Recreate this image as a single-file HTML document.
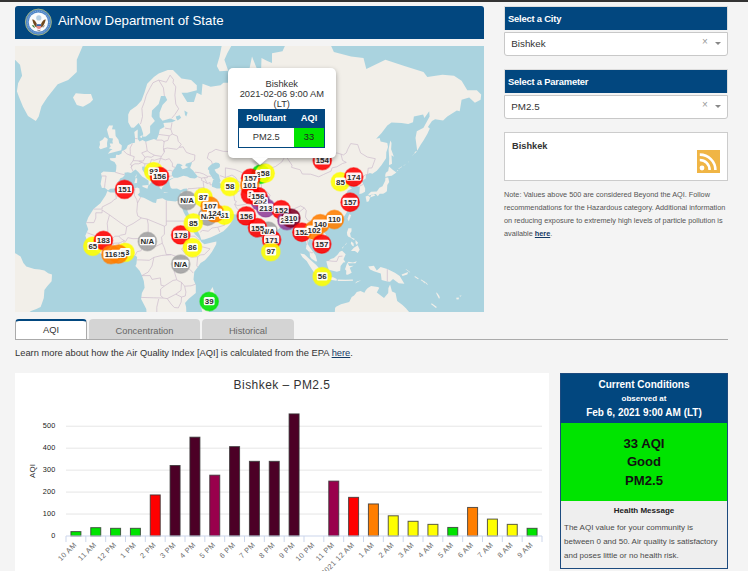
<!DOCTYPE html>
<html><head><meta charset="utf-8">
<style>
*{margin:0;padding:0;box-sizing:border-box}
html,body{width:748px;height:571px;overflow:hidden;background:#f4f4f4;font-family:"Liberation Sans",sans-serif;position:relative}
.a{position:absolute;white-space:nowrap}
#topbar{left:0;top:0;width:748px;height:2px;background:#333}
#hdr{left:15px;top:6px;width:469px;height:33px;background:#02477f;border-radius:3px 3px 0 0}
#hdrt{left:58px;top:11px;font-size:13.3px;color:#fff;line-height:20px}
#map{left:15px;top:46px;width:469px;height:266px;overflow:hidden;background:#aad3df}
.selh{left:504px;width:224px;height:23.5px;background:#02477f;border:1px solid #ddd;border-bottom:none}
.selh span{position:absolute;left:3px;top:5.6px;font-size:9.4px;font-weight:bold;color:#fff;line-height:11px;letter-spacing:-0.2px}
.selb{left:504px;width:224px;height:24px;background:#fff;border:1px solid #c8c8c8;border-radius:0 0 3px 3px}
.selb .v{position:absolute;left:6.3px;top:5.2px;font-size:9.8px;color:#333;line-height:11px}
.selb .x{position:absolute;left:197px;top:3.5px;font-size:10px;color:#999;line-height:11px}
.selb .ar{position:absolute;left:210px;top:9.5px;width:0;height:0;border-left:3px solid transparent;border-right:3px solid transparent;border-top:3px solid #888}
#rss{left:504px;top:132px;width:224px;height:49px;background:#fff;border:1px solid #ccc}
#note{left:504px;top:188px;font-size:7.3px;color:#555;line-height:13px;white-space:normal;width:230px}
.tab{top:319px;height:20px;background:#d4d4d4;border-radius:4px 4px 0 0;font-size:9.3px;color:#666;text-align:center;line-height:24px}
#tab1{left:15px;width:72px;background:#fff;border:1px solid #aaa;border-top:2px solid #02477f;color:#333;line-height:19px;border-bottom:none}
#tabline{left:15px;top:339px;width:713px;height:1px;background:#aaa}
#learn{left:15px;top:348px;font-size:9.33px;color:#333;line-height:11px}
#chart{left:15px;top:373px;width:534px;height:198px;background:#fff}
#cc{left:560px;top:373px;width:168px;height:196px;border:1px solid #1c4a7e;background:#eee}
</style></head><body>
<div class="a" id="topbar"></div>
<div class="a" id="hdr"></div>
<svg class="a" style="left:24px;top:8px" width="29" height="29" viewBox="0 0 29 29">
  <circle cx="14.4" cy="14.1" r="13" fill="#4f86c8" stroke="#a9b87a" stroke-width="0.9"/>
  <circle cx="14.4" cy="14.1" r="11" fill="none" stroke="#8fb3e0" stroke-width="1" stroke-dasharray="1 1"/>
  <circle cx="14.4" cy="14.1" r="9.7" fill="#fbfbfb"/>
  <circle cx="14.8" cy="9.9" r="2.6" fill="#b7d0e4"/>
  <path d="M8.2 11.5 Q10.5 11 12.6 15.5 L12.8 19.5 Q10 18.5 8.2 11.5Z" fill="#70481f"/>
  <path d="M21.8 11.5 Q19.5 11 17.2 15.5 L17 19.5 Q20 18.5 21.8 11.5Z" fill="#70481f"/>
  <path d="M7.8 17 Q9 20 11 20 L10 17.5Z" fill="#3f8a3f"/>
  <path d="M21 17 Q20 20 18.5 20 L19.5 17.5Z" fill="#999"/>
  <rect x="12.7" y="16.2" width="4.4" height="1.8" fill="#2f5ea8"/>
  <path d="M12.7 18 H17.1 V20 Q14.9 22.3 12.7 20Z" fill="#e98a8a"/>
  <path d="M13 21.5 Q14.9 23 16.8 21.5 L16 23 Q14.9 23.6 13.8 23Z" fill="#888"/>
</svg>
<div class="a" id="hdrt">AirNow Department of State</div>
<div class="a" id="map"><svg width="469" height="266" viewBox="0 0 469 266" style="position:absolute;left:0;top:0">
<rect width="469" height="266" fill="#aad3df"/>
<polygon points="92.4,145.0 90.7,149.2 85.4,157.3 78.5,163.1 73.2,171.6 71.1,177.2 73.2,183.2 70.3,189.8 71.9,194.1 75.1,197.0 77.6,199.9 79.9,203.8 83.7,206.3 89.4,209.7 96.0,208.2 101.8,208.6 106.5,206.3 110.1,205.9 115.1,209.9 119.9,209.3 122.1,210.9 121.8,214.3 121.4,218.1 120.4,220.0 124.6,224.8 126.9,229.6 128.8,234.9 129.6,241.7 126.9,247.0 126.1,253.0 131.3,262.9 132.2,278.1 171.3,278.1 171.3,265.2 171.1,261.1 170.0,257.0 173.8,252.8 180.8,247.0 180.8,239.2 178.5,233.4 179.3,225.7 182.7,221.3 185.6,217.1 190.0,214.3 194.2,209.5 197.0,205.7 201.2,198.2 201.4,195.5 197.0,196.4 189.4,198.2 186.2,195.8 185.0,193.5 179.9,188.2 177.0,183.2 174.7,177.2 171.3,171.2 168.4,165.7 165.8,158.4 169.0,163.1 170.3,159.2 173.2,166.8 178.3,176.1 181.8,183.2 184.8,189.2 186.3,193.7 189.4,193.5 196.1,191.2 203.1,188.0 208.4,185.2 212.3,181.4 215.1,178.2 217.6,174.1 215.1,171.8 211.1,169.1 210.9,166.1 209.4,167.8 206.5,170.6 202.0,170.4 202.0,166.6 200.4,169.3 198.9,165.5 195.1,159.7 196.6,158.1 199.5,159.9 201.6,162.7 207.5,165.7 210.9,164.4 212.8,167.4 221.0,168.5 230.5,168.0 231.9,169.9 234.7,172.4 237.0,173.7 235.1,174.5 237.0,177.2 242.0,176.1 242.4,181.2 243.7,187.6 246.2,193.3 249.0,199.1 251.3,202.6 252.6,200.9 255.7,198.4 256.6,192.9 256.3,188.2 260.5,186.0 264.6,182.2 268.6,178.8 269.4,176.1 272.3,175.1 276.1,175.1 278.5,174.5 279.5,177.6 282.7,182.2 283.5,187.2 285.4,187.6 289.6,186.2 290.7,192.1 291.5,199.0 290.9,202.8 294.7,206.6 294.9,210.5 296.6,212.8 300.8,215.6 302.2,215.2 300.6,209.5 298.6,206.5 295.1,201.8 292.6,198.0 294.0,193.7 295.1,192.1 296.1,193.7 298.6,195.1 300.8,198.0 303.3,201.7 306.9,198.4 311.7,196.0 311.7,191.6 310.9,188.4 307.1,184.6 305.0,181.2 306.7,178.2 309.4,176.1 312.6,176.1 313.8,178.6 315.1,176.1 319.9,174.7 325.6,173.3 329.6,169.7 331.5,166.8 333.2,162.9 335.9,158.4 334.7,156.6 335.9,155.3 333.8,152.3 331.1,148.0 332.8,144.5 337.0,142.4 333.8,140.2 330.2,141.2 328.1,137.5 331.3,135.1 334.7,132.6 336.5,133.6 334.7,137.8 337.0,136.3 340.5,135.1 342.4,136.1 342.2,140.2 344.8,140.9 344.3,148.0 346.9,147.5 350.0,145.7 350.2,142.6 348.5,138.5 346.6,135.3 350.7,132.6 350.9,128.8 354.9,126.9 357.4,127.7 361.8,124.8 366.4,119.2 371.1,112.2 371.3,106.3 373.0,101.1 372.3,97.0 365.6,95.4 364.7,92.1 361.2,92.8 366.6,87.0 372.3,79.6 376.5,76.6 386.6,77.0 393.2,78.1 398.0,76.2 398.9,70.5 408.1,68.5 409.4,72.0 414.2,65.3 414.6,70.5 408.5,81.8 401.8,85.3 400.5,92.1 402.2,104.8 405.8,98.6 408.5,94.4 412.3,88.1 414.8,82.5 412.9,81.0 417.0,75.1 420.1,73.2 428.1,74.4 432.3,70.5 441.8,64.4 444.7,65.3 446.6,53.7 454.2,51.4 459.9,56.8 465.6,53.7 466.2,48.6 461.8,44.3 452.3,44.3 446.6,34.7 439.0,29.8 427.5,28.7 412.3,30.9 408.5,25.9 389.4,20.0 370.4,13.8 351.3,23.0 348.5,11.9 336.1,10.6 318.9,6.0 309.4,-14.8 301.8,-25.1 284.6,-10.8 271.3,-3.2 267.5,5.3 257.0,7.3 257.0,17.0 252.3,15.1 246.5,11.9 245.6,39.3 242.7,46.7 240.8,39.3 242.4,24.1 237.0,10.6 233.2,28.7 230.4,36.7 219.9,30.3 218.0,36.7 208.4,36.7 205.6,39.3 195.7,40.8 187.5,37.8 186.5,49.1 181.8,46.7 178.9,55.9 172.2,55.9 169.4,51.4 166.5,46.7 172.2,46.7 181.8,44.3 181.8,39.3 176.1,34.1 166.5,32.5 158.0,24.1 152.8,24.1 143.7,27.6 138.9,30.9 132.2,37.8 129.4,46.7 126.5,54.6 121.8,59.8 115.1,64.4 113.2,68.5 113.2,76.2 116.1,81.4 118.9,81.8 123.7,77.0 126.1,81.0 128.1,87.4 128.1,90.8 130.9,90.4 135.1,87.0 135.1,79.9 139.9,75.1 136.6,70.5 137.0,64.4 143.7,58.1 146.0,50.0 150.3,50.0 152.2,54.1 147.5,59.0 144.6,66.5 144.6,71.3 147.5,74.7 155.1,72.4 160.8,74.4 157.0,76.2 148.4,77.0 149.4,81.0 144.8,83.5 143.7,88.8 141.4,94.1 138.9,93.1 134.2,94.4 130.7,95.7 127.5,94.1 124.6,95.4 122.7,93.1 122.7,83.5 119.3,86.0 120.1,92.4 119.9,96.7 117.0,97.3 112.8,99.2 111.3,102.7 109.4,103.9 106.9,105.1 106.5,107.5 103.9,109.0 101.2,108.7 100.6,111.9 94.7,112.2 95.5,114.2 99.5,115.9 101.4,119.2 101.2,123.2 100.6,126.2 96.4,125.9 88.4,125.4 86.0,127.2 86.9,131.1 85.6,138.0 86.9,142.1 89.6,141.7 91.7,143.3 93.0,144.5 95.3,142.8 99.9,142.6 102.7,139.0 104.1,137.8 103.1,136.1 105.4,132.3 107.9,131.3 109.8,129.0 109.4,126.7 112.8,126.2 116.1,126.9 117.6,125.4 120.6,123.5 123.3,125.9 125.6,128.8 127.1,130.5 130.7,132.8 133.6,134.8 133.6,139.7 135.3,137.5 136.2,136.3 135.3,133.8 138.9,134.6 136.1,132.1 134.2,130.0 130.3,128.2 127.3,123.8 127.1,120.8 130.0,120.3 129.6,121.6 131.3,121.1 134.0,125.6 137.0,127.2 139.9,129.5 140.6,132.3 140.6,134.1 142.2,136.1 143.7,138.8 144.8,141.9 146.5,143.6 147.5,140.9 148.8,140.0 149.4,138.5 147.1,136.6 148.6,134.8 147.3,133.3 149.4,132.8 153.2,132.8 153.6,133.8 157.0,132.3 158.9,131.6 157.0,129.8 156.8,126.7 158.3,124.0 160.2,121.4 162.2,117.8 164.6,117.8 167.7,119.2 165.6,120.8 167.7,123.2 171.3,121.9 173.2,121.1 170.3,120.0 170.9,117.8 177.0,115.9 176.4,118.6 175.1,121.9 178.0,124.6 182.9,130.8 179.9,132.6 175.1,132.1 172.2,130.5 168.4,129.8 162.7,131.8 159.1,131.8 154.2,134.6 154.7,137.5 154.7,138.8 155.9,142.1 157.4,142.8 162.0,142.6 165.6,144.3 168.8,142.8 172.2,142.4 171.9,145.0 172.1,147.1 170.3,151.9 169.0,155.3 165.2,155.5 162.7,154.6 160.6,155.5 151.3,154.6 147.5,152.3 141.8,153.2 141.0,157.0 138.0,156.4 133.2,154.1 128.8,151.7 125.2,151.0 122.7,148.7 124.8,146.4 124.4,142.6 122.3,141.4 118.9,142.4 113.2,142.6 109.4,142.6 103.7,145.0 99.9,146.6 95.1,146.4" fill="#f2efe9"/>
<polygon points="92.8,107.8 106.3,104.2 106.9,99.5 104.2,97.3 103.5,93.8 100.6,90.1 100.2,83.5 97.0,83.2 98.0,79.6 94.1,79.6 91.9,83.5 93.0,87.7 94.3,92.1 98.0,92.4 97.4,95.4 98.0,97.6 94.7,97.6 95.7,100.8 93.8,102.3 97.6,103.6 95.7,104.2" fill="#f2efe9"/>
<polygon points="92.2,101.1 92.0,97.0 92.8,93.1 89.8,91.1 87.5,93.8 84.6,95.4 85.0,98.6 84.0,101.7 85.6,103.3 88.4,102.3" fill="#f2efe9"/>
<polygon points="61.8,59.0 58.0,51.4 60.8,47.2 69.4,48.1 76.0,48.1 78.0,53.7 75.1,56.8 68.0,60.7" fill="#f2efe9"/>
<polygon points="20.8,75.1 23.7,70.5 26.5,60.2 32.2,51.4 42.7,38.3 53.2,34.1 61.8,25.9 61.8,13.8 68.4,-1.7 69.4,-47.8 -10.6,-47.8 -10.6,13.8 0.0,13.8 5.0,18.8 7.1,29.8 3.1,37.3 1.9,45.3 4.0,50.9 8.0,60.7 13.0,70.1" fill="#f2efe9"/>
<polygon points="201.8,20.0 204.6,25.3 213.2,24.7 209.4,13.8 212.3,7.3 218.0,-3.2 233.2,-19.0 218.0,-14.8 206.5,0.4 204.6,10.6 202.7,17.0" fill="#f2efe9"/>
<polygon points="374.2,119.2 377.0,117.8 376.5,109.3 378.9,110.7 376.1,103.3 376.5,97.0 375.5,94.4 374.8,97.0 373.6,103.3 374.2,112.2 374.0,117.8" fill="#f2efe9"/>
<polygon points="370.4,131.1 372.7,130.3 376.7,129.8 381.4,126.4 378.0,124.0 374.0,120.5 373.2,125.1 370.9,126.7 370.2,129.0" fill="#f2efe9"/>
<polygon points="353.2,148.5 356.1,145.7 361.8,145.4 364.5,141.7 367.5,140.2 370.2,134.8 370.4,131.8 373.2,131.6 374.2,136.1 372.3,139.0 372.1,142.4 371.9,145.2 370.0,146.8 368.1,147.8 364.7,147.8 362.8,150.3 360.8,148.0 357.0,148.5 354.2,149.4" fill="#f2efe9"/>
<polygon points="355.1,151.4 360.3,149.6 358.9,148.2 356.3,148.7" fill="#f2efe9"/>
<polygon points="350.6,150.5 353.2,149.4 355.1,151.4 353.8,155.3 351.7,155.9 350.9,152.3" fill="#f2efe9"/>
<polygon points="332.5,173.1 334.2,168.3 336.1,168.9 335.1,172.0 333.8,175.3" fill="#f2efe9"/>
<polygon points="310.6,180.8 313.2,179.0 315.1,180.0 313.2,182.8 310.7,182.2" fill="#f2efe9"/>
<polygon points="255.7,202.8 256.5,199.3 259.7,203.8 258.4,206.3 256.1,206.1" fill="#f2efe9"/>
<polygon points="331.9,186.6 333.4,182.2 336.5,182.2 336.5,185.2 335.1,187.6 335.9,191.2 339.9,193.1 338.9,193.9 335.3,191.6 333.4,190.8 332.3,189.2" fill="#f2efe9"/>
<polygon points="336.1,204.7 338.9,201.8 342.7,199.3 344.7,203.8 342.7,207.0 339.9,205.1 336.5,205.1" fill="#f2efe9"/>
<polygon points="340.5,194.1 343.1,196.8 341.8,199.0 340.5,197.0" fill="#f2efe9"/>
<polygon points="336.1,195.5 338.4,197.0 338.9,200.5 337.0,199.3 335.9,197.8" fill="#f2efe9"/>
<polygon points="326.9,202.0 331.3,198.0 331.9,196.4 330.4,198.2 327.5,202.4" fill="#f2efe9"/>
<polygon points="311.3,215.2 312.5,220.0 313.8,223.8 321.8,225.7 325.2,224.8 325.6,220.0 328.3,216.6 330.4,216.2 328.5,213.3 330.7,208.2 327.1,204.7 324.6,205.7 322.7,208.6 318.9,212.0 315.7,213.1 313.2,214.9" fill="#f2efe9"/>
<polygon points="285.2,207.6 289.4,208.2 294.7,213.3 301.2,219.1 305.4,223.8 305.2,229.2 302.7,229.4 298.6,225.7 294.7,220.0 291.7,214.9 287.5,211.2" fill="#f2efe9"/>
<polygon points="304.1,231.1 305.6,229.4 310.0,229.9 314.2,231.3 318.2,231.3 321.8,233.0 321.6,234.7 315.1,233.8 309.4,233.0 304.6,231.5" fill="#f2efe9"/>
<polygon points="322.7,233.6 330.4,233.8 337.8,233.6 338.0,234.7 330.4,235.1 322.7,234.9" fill="#f2efe9"/>
<polygon points="339.9,237.4 346.2,234.2 341.8,235.5" fill="#f2efe9"/>
<polygon points="331.1,228.6 331.3,224.8 330.0,223.2 331.9,217.7 333.4,215.8 338.0,216.4 341.8,215.2 340.5,217.3 332.8,217.3 334.2,220.0 338.7,219.8 334.7,221.7 336.7,226.7 332.8,228.8" fill="#f2efe9"/>
<polygon points="353.2,220.4 358.9,219.8 361.8,224.6 365.6,221.0 372.3,223.1 379.9,226.7 384.7,230.1 389.4,237.8 383.7,237.2 378.0,233.0 375.1,235.7 372.3,235.5 366.6,234.0 365.8,227.6 358.9,225.3 355.1,223.4" fill="#f2efe9"/>
<polygon points="386.6,228.6 393.2,226.1 392.3,228.6 387.5,229.9" fill="#f2efe9"/>
<polygon points="320.1,262.1 321.0,260.7 326.0,258.2 334.2,256.0 336.7,251.0 339.1,249.4 341.8,246.0 345.6,245.0 349.4,246.8 350.9,244.1 352.8,241.9 356.1,240.0 362.8,241.1 364.3,241.7 361.8,246.4 369.0,252.0 373.2,247.0 373.4,242.1 375.1,238.6 377.0,245.4 380.5,247.0 382.2,255.0 387.5,259.0 390.9,262.3 396.1,268.4 395.1,278.1 318.9,278.1" fill="#f2efe9"/>
<polygon points="187.5,267.3 186.2,261.1 188.3,256.0 187.5,251.0 191.3,248.4 194.5,246.0 197.6,241.1 199.7,247.8 198.5,251.0 195.1,262.1 193.4,267.3" fill="#f2efe9"/>
<polygon points="165.2,147.5 166.5,145.9 169.6,145.2 168.4,147.1 166.5,147.8" fill="#f2efe9"/>
<polygon points="148.4,146.1 153.8,146.4 149.4,146.8" fill="#f2efe9"/>
<polygon points="127.3,139.5 133.4,139.0 132.4,142.8 127.5,140.7" fill="#f2efe9"/>
<polygon points="119.3,137.3 120.8,131.8 122.3,132.8 122.0,137.1" fill="#f2efe9"/>
<polygon points="120.1,131.3 121.8,127.7 121.2,131.3" fill="#f2efe9"/>
<polygon points="124.6,91.1 127.7,88.8 126.9,92.1" fill="#f2efe9"/>
<polygon points="399.9,229.9 403.7,232.4 403.1,233.2 399.5,230.9" fill="#f2efe9"/>
<polygon points="406.2,233.4 410.8,236.3 410.0,236.9 405.6,234.0" fill="#f2efe9"/>
<polygon points="408.1,235.9 410.2,236.9 409.4,237.2" fill="#f2efe9"/>
<polygon points="410.9,236.3 412.9,238.4 412.3,238.8 410.4,237.1" fill="#f2efe9"/>
<polygon points="421.0,246.6 422.2,247.0 424.3,250.0 424.9,252.2 423.9,252.4 421.8,248.6" fill="#f2efe9"/>
<polygon points="416.1,257.4 417.0,257.4 421.8,261.1 421.0,261.9 416.5,258.6" fill="#f2efe9"/>
<polygon points="441.2,251.8 443.7,251.6 443.9,253.2 441.6,253.4" fill="#f2efe9"/>
<polygon points="444.3,249.8 446.6,249.4 445.4,250.8" fill="#f2efe9"/>
<polygon points="390.8,222.9 394.2,225.2 395.3,227.1 393.6,225.5 390.9,223.6" fill="#f2efe9"/>
<polygon points="381.4,125.6 383.3,124.6 382.8,124.0" fill="#f2efe9"/>
<polygon points="383.7,123.0 387.1,120.8 386.8,120.5 383.5,122.4" fill="#f2efe9"/>
<polygon points="388.7,119.7 390.6,118.6 390.2,118.4 388.5,119.5" fill="#f2efe9"/>
<polygon points="393.2,116.7 394.2,115.6 393.8,115.4" fill="#f2efe9"/>
<polygon points="399.7,107.8 401.8,105.4 401.0,105.1 399.3,106.9" fill="#f2efe9"/>
<polygon points="397.6,109.8 398.6,108.4 398.2,108.2" fill="#f2efe9"/>
<polygon points="37.0,228.6 33.2,227.3 29.4,224.4 24.6,223.6 19.3,222.9 11.3,220.6 8.4,217.1 5.6,210.5 0.8,207.6 -10.6,202.8 -10.6,278.1 11.3,269.4 11.3,268.4 16.0,265.0 21.4,263.1 25.6,261.1 26.9,257.6 28.8,252.0 29.4,244.1 32.2,240.2 36.6,235.3" fill="#f2efe9"/>
<polygon points="193.2,121.4 194.7,120.0 196.3,118.4 198.0,117.5 200.8,116.4 203.7,117.0 205.0,118.4 204.8,121.1 202.7,122.4 200.8,123.0 199.5,123.8 201.4,126.7 203.7,128.5 204.3,130.5 204.6,132.3 205.6,134.8 204.6,136.6 206.3,138.5 206.3,141.4 204.6,142.4 201.8,142.6 199.3,141.4 197.0,140.7 196.8,138.5 197.6,136.1 198.0,134.1 199.5,133.8 198.0,133.3 196.3,130.3 194.7,127.7 194.2,127.2 194.2,124.6 192.8,123.2" fill="#aad3df"/>
<polygon points="301.4,103.0 304.6,102.3 310.4,97.0 312.8,89.8 311.7,89.4 308.5,97.0 302.7,101.7" fill="#aad3df"/>
<polygon points="164.2,218.9 168.4,218.7 169.4,221.0 167.5,223.4 164.1,221.9" fill="#aad3df"/>
<polygon points="160.8,70.5 164.6,69.3 166.2,71.7 162.7,74.4 161.4,72.8" fill="#aad3df"/>
<polygon points="169.4,64.4 172.6,66.5 171.3,70.5 170.0,68.9" fill="#aad3df"/>
<polygon points="243.7,121.9 245.6,117.8 254.2,117.5 248.4,118.6 244.6,119.7" fill="#aad3df"/>
<g fill="none" stroke="#cdbccd" stroke-width="0.7" stroke-linejoin="round">
<polyline points="100.2,126.2 105.0,127.7 109.8,128.8"/>
<polyline points="108.4,104.5 111.7,107.8 115.3,109.3 119.3,110.7 118.1,114.7 115.3,118.6 117.0,119.5 116.2,121.6 118.0,125.1"/>
<polyline points="117.4,97.6 115.1,102.0 115.3,105.4 115.3,109.3"/>
<polyline points="120.1,92.4 122.5,92.8"/>
<polyline points="130.7,95.7 131.5,99.9 132.2,104.8 126.7,106.9 130.0,111.3 128.4,115.0 123.7,115.0 121.8,114.7 118.1,114.7"/>
<polyline points="132.2,104.8 135.1,106.9 139.5,109.3 146.5,110.4 149.4,106.0 148.4,101.7 149.2,95.7 147.1,94.1 141.4,94.1"/>
<polyline points="123.7,115.0 126.9,116.4 129.8,117.8 135.1,117.8 136.4,113.6 139.5,114.2 145.6,112.4 146.5,110.4"/>
<polyline points="130.0,111.3 132.2,110.7 136.4,111.3 139.5,109.3"/>
<polyline points="145.6,112.4 143.7,117.8 142.3,118.9 139.5,119.5 135.1,117.8"/>
<polyline points="129.8,117.8 129.8,120.3"/>
<polyline points="139.5,119.5 139.9,122.2 141.0,124.6 140.4,127.2 138.9,128.5"/>
<polyline points="142.3,118.9 146.9,123.2 146.5,124.6 147.5,125.1 155.1,124.3 158.2,125.4"/>
<polyline points="146.5,124.6 146.3,127.2 147.5,131.3 153.2,130.5 157.0,129.8"/>
<polyline points="142.2,135.8 143.7,132.8 147.5,131.3"/>
<polyline points="140.4,129.3 142.7,129.3 142.7,132.3 143.7,132.8"/>
<polyline points="145.6,112.4 150.3,113.9 154.3,112.7 157.4,117.2 157.4,120.5 160.2,121.4"/>
<polyline points="149.4,106.0 148.6,103.0 152.2,102.0 161.8,103.3 164.2,101.4 168.1,100.8 171.3,106.3 176.1,108.1 179.9,109.0 179.5,114.2 176.4,116.1"/>
<polyline points="164.2,101.4 166.2,98.3 163.3,95.4 162.3,90.1 157.4,88.1 154.3,89.8 152.8,94.4 148.4,95.7"/>
<polyline points="143.7,88.4 154.3,89.8"/>
<polyline points="150.0,82.1 155.9,83.2 157.4,88.1"/>
<polyline points="155.9,83.2 157.0,76.6"/>
<polyline points="156.6,72.4 159.9,68.5 163.7,62.8 160.8,58.1 159.9,49.1 160.8,40.8 158.0,36.7 158.5,33.6"/>
<polyline points="149.4,50.0 148.4,41.8 143.7,34.1 151.3,36.2 155.1,29.2 158.5,33.6"/>
<polyline points="143.7,34.1 138.0,36.7 135.1,41.8 131.3,49.1 129.4,55.9 126.9,62.4 127.5,70.5 126.1,76.2 125.4,78.1"/>
<polyline points="86.7,130.0 91.1,130.0 90.5,134.3 90.0,137.3 89.6,141.7"/>
<polyline points="116.2,121.6 117.0,119.5 119.9,117.8 123.7,117.8 126.9,116.4"/>
<polyline points="197.4,118.1 196.4,115.0 192.3,112.2 193.8,106.9 196.4,106.0 200.8,103.3 208.4,105.4 215.1,105.4 220.6,105.4 219.9,101.7 218.0,100.2 220.3,95.7 228.4,93.4 235.1,91.1 242.7,95.4 249.4,95.4 252.3,100.2 256.1,105.4 262.7,104.8 265.6,108.7 270.0,110.4"/>
<polyline points="270.9,110.1 275.1,106.3 283.7,107.8 290.4,102.0 291.3,107.8 298.0,106.6 300.8,107.8 307.5,107.8 310.4,109.8 317.0,109.3 321.8,106.9 326.0,108.1"/>
<polyline points="326.0,108.1 328.3,109.0 331.3,106.9 332.7,103.3 335.7,97.6 342.7,98.6 345.6,106.9 352.3,111.0 360.3,112.7 357.0,121.9 353.2,122.2 352.5,128.8"/>
<polyline points="270.9,110.1 277.0,119.2 276.6,121.4 285.2,123.8 287.3,128.0 295.7,128.2 303.7,130.8 308.5,128.5 316.1,125.1 317.0,121.9 321.8,120.8 327.5,117.5 331.3,116.4 327.5,114.4 326.0,108.1"/>
<polyline points="270.0,110.4 266.9,115.9 260.5,120.5 256.5,121.9 256.5,129.3"/>
<polyline points="256.5,129.3 246.5,127.7 239.3,127.7 234.2,132.8 229.4,127.5 219.9,123.5 210.4,121.9 210.4,131.6 204.8,129.5"/>
<polyline points="210.4,131.6 217.0,129.0 220.8,131.6 222.7,134.8 226.5,137.5 230.4,139.7 230.4,141.4"/>
<polyline points="206.3,141.4 212.3,139.2 218.0,142.1 220.1,143.1 220.8,146.1 222.7,145.9 226.5,143.8 230.4,141.4"/>
<polyline points="230.4,141.4 234.2,141.7 237.0,140.7 239.9,140.0 239.9,142.8 246.4,141.7"/>
<polyline points="237.0,134.3 243.9,136.3 248.4,133.8 256.5,129.3"/>
<polyline points="246.4,141.7 246.5,138.5 243.9,136.3"/>
<polyline points="220.1,143.1 218.9,149.2 219.7,154.8 221.4,155.3 219.7,158.4"/>
<polyline points="246.4,141.7 239.9,144.5 238.9,149.2 235.7,151.4 237.0,154.8 230.4,158.4 222.7,159.5 219.7,158.4"/>
<polyline points="219.7,158.4 221.8,162.5 224.1,164.2 223.3,166.4 221.0,168.5"/>
<polyline points="246.4,141.7 247.5,142.6 251.9,145.7 247.5,152.6 245.6,155.9 243.7,158.4 238.9,162.5 237.0,164.6 238.0,167.8 234.7,170.6"/>
<polyline points="251.9,145.7 255.1,149.2 253.8,152.6 254.2,155.9 257.8,157.7 263.7,161.2 271.3,162.7 273.2,164.0 278.9,162.9 285.6,159.9 289.4,161.9 291.3,164.6 290.4,171.0 293.2,174.9 297.0,174.9 298.9,173.9 303.7,172.9 306.9,173.5 309.4,176.1"/>
<polyline points="256.1,160.5 262.7,163.8 271.3,165.9 271.3,162.7"/>
<polyline points="271.3,165.9 274.2,166.8 279.9,168.9 278.5,172.0 279.9,177.2"/>
<polyline points="271.3,165.9 272.3,169.9 273.2,175.1"/>
<polyline points="279.9,177.2 281.8,171.0 284.6,165.7 289.4,161.9"/>
<polyline points="294.4,178.4 291.3,179.8 289.8,183.2 292.1,186.2 290.7,189.2 292.6,195.1 291.5,199.0"/>
<polyline points="294.4,178.4 296.5,180.2 296.3,184.2 299.9,182.6 303.1,184.2 304.8,189.2 299.9,190.6 298.6,192.1 299.7,195.8"/>
<polyline points="298.2,174.3 301.8,177.4 303.3,180.0 306.9,184.6 308.5,189.2 308.5,190.2 305.6,195.5 302.6,198.2"/>
<polyline points="294.4,178.4 297.0,174.9"/>
<polyline points="294.6,205.7 297.0,207.0 298.2,206.3"/>
<polyline points="312.5,214.5 317.0,215.2 321.8,215.4 323.7,210.5 327.5,210.1"/>
<polyline points="372.3,223.1 372.3,235.5"/>
<polyline points="340.5,135.1 343.7,132.3 347.5,131.1 350.4,128.8 352.5,128.8"/>
<polyline points="343.9,140.5 348.3,138.3"/>
<polyline points="172.2,144.5 173.4,142.6 176.1,142.6 184.3,141.9 189.0,141.7 188.1,136.3 189.0,135.6"/>
<polyline points="182.9,130.8 186.5,132.1 186.7,134.6 189.0,135.6"/>
<polyline points="179.9,126.2 184.6,126.7 188.6,128.0 192.4,130.3 196.3,130.3"/>
<polyline points="189.0,135.6 192.3,137.5 195.1,136.6 195.1,138.8 196.8,138.8"/>
<polyline points="186.5,132.1 189.4,131.6 192.3,131.8 192.4,130.3"/>
<polyline points="189.4,131.6 190.3,133.6 192.3,137.5"/>
<polyline points="184.3,141.9 182.3,148.0 177.6,150.5 174.2,152.6 171.9,152.1"/>
<polyline points="178.0,153.7 174.2,154.8 176.1,157.0 173.2,158.6 170.3,159.5"/>
<polyline points="189.0,141.7 190.3,145.0 191.3,146.8 190.3,149.2 192.3,151.4 194.7,154.8 195.1,158.1"/>
<polyline points="177.6,150.5 181.8,154.8 188.8,159.9 192.3,160.1 194.5,161.4"/>
<polyline points="185.2,186.2 187.5,184.4 193.2,185.2 197.0,182.0 202.7,181.2 209.6,179.2 208.4,173.7 209.4,171.2 211.1,169.1"/>
<polyline points="202.7,181.2 204.8,186.0"/>
<polyline points="202.0,170.4 203.7,173.3 208.4,173.7"/>
<polyline points="169.0,155.3 170.2,159.2"/>
<polyline points="151.3,175.1 162.7,175.1 174.0,175.1"/>
<polyline points="173.2,190.6 174.2,185.2 177.0,183.2"/>
<polyline points="173.2,190.6 170.9,195.1 168.8,198.0 168.4,201.8 166.5,202.8 170.3,207.8"/>
<polyline points="170.3,207.8 176.1,211.2 182.7,210.7 185.6,208.9 189.2,208.6 195.1,202.8 187.5,200.9 186.2,199.9 185.2,197.0"/>
<polyline points="182.7,210.7 181.8,219.8 182.9,221.3"/>
<polyline points="178.3,227.1 175.3,223.8 168.2,220.0 168.4,216.0 170.3,209.5"/>
<polyline points="168.2,211.2 162.7,211.0 156.1,208.6 151.3,208.6 149.4,201.8 147.3,197.2"/>
<polyline points="147.3,197.2 139.9,200.9 134.2,203.8 131.3,202.8 133.2,198.0 131.3,195.1 130.5,192.9"/>
<polyline points="130.5,192.9 128.4,198.0 126.1,204.7 122.1,205.7 120.2,209.3"/>
<polyline points="130.5,192.9 133.2,187.2 133.2,178.2 132.2,173.1 126.5,172.0 118.0,177.6 111.7,180.8 110.5,188.2 105.6,189.2 104.1,190.2 105.6,192.3 109.0,194.5 110.5,195.7 112.8,191.7 118.0,192.7 122.7,192.5 128.4,192.1 130.5,192.9"/>
<polyline points="132.2,173.1 149.4,180.2 151.3,179.2 151.3,154.6"/>
<polyline points="149.4,180.2 149.4,188.2 146.5,191.2 147.3,197.2"/>
<polyline points="126.5,172.0 122.7,169.9 121.8,165.7 122.5,157.0 125.6,151.2"/>
<polyline points="119.9,142.4 119.3,149.2 121.8,153.7 122.5,157.0"/>
<polyline points="100.4,146.6 101.4,152.6 98.9,153.7 96.6,156.2 87.1,161.0 87.1,163.1 78.5,163.1"/>
<polyline points="87.1,164.0 87.1,166.8 80.8,166.8 80.8,172.0 78.9,176.6 71.3,176.6"/>
<polyline points="87.1,164.0 94.5,168.9 106.0,177.2 111.7,180.8"/>
<polyline points="94.5,168.9 92.2,177.2 93.2,188.2 81.8,188.2 80.4,189.8 72.2,186.8"/>
<polyline points="80.4,189.8 81.8,194.1 87.5,196.4 93.2,198.0 98.3,197.2 103.7,197.0 105.6,196.6 109.0,194.5"/>
<polyline points="93.2,198.0 96.0,194.1 99.9,190.2 104.1,190.2"/>
<polyline points="98.3,197.2 98.1,208.6"/>
<polyline points="103.7,197.0 106.0,206.5"/>
<polyline points="109.0,194.5 108.8,205.9"/>
<polyline points="87.5,196.4 87.5,203.8 89.4,209.7"/>
<polyline points="71.9,194.1 77.6,193.9 82.0,194.3 82.7,199.0 78.9,200.9"/>
<polyline points="122.1,213.9 125.2,213.9 134.2,214.3 138.9,211.4 146.5,209.5 156.1,208.6"/>
<polyline points="138.9,211.4 137.0,220.0 133.2,226.1 126.9,229.6"/>
<polyline points="162.7,211.0 160.1,220.8 159.3,225.7 161.8,233.8"/>
<polyline points="126.9,229.6 135.1,229.6 137.0,233.4 145.4,231.9 146.0,239.2 149.4,240.0 145.6,243.1 145.6,249.6 148.4,252.0"/>
<polyline points="126.1,251.4 138.9,251.8 148.4,252.0 152.2,252.6 160.8,248.2"/>
<polyline points="180.6,238.2 176.1,239.8 169.6,240.2 166.5,236.3 162.7,234.5 161.8,233.8"/>
<polyline points="166.5,236.3 166.0,244.3 160.8,248.2 166.5,251.0 166.2,256.0 163.3,261.9"/>
<polyline points="152.2,252.6 156.1,258.0 159.3,261.5 163.3,261.9"/>
<polyline points="141.8,266.3 141.8,261.1 143.7,253.0"/>
<polyline points="169.6,240.2 170.9,246.0 170.3,250.0 166.5,251.0"/>
<polyline points="149.4,240.0 158.0,234.4 161.8,233.8"/>
<polyline points="173.2,190.6 177.0,190.2 179.9,190.2 182.7,193.1 185.2,194.1"/>
<polyline points="183.3,195.7 185.2,197.0"/>
</g>
<defs><filter id="hb" x="-30%" y="-50%" width="160%" height="200%"><feGaussianBlur stdDeviation="0.7"/></filter></defs>
<circle cx="138.7" cy="125.6" r="9.2" fill="#ffff00" fill-opacity="0.88" stroke="#ffff00" stroke-opacity="0.55" stroke-width="1.5"/>
<circle cx="144.5" cy="130.5" r="9.2" fill="#ff0000" fill-opacity="0.88" stroke="#ff0000" stroke-opacity="0.55" stroke-width="1.5"/>
<circle cx="109.5" cy="143.4" r="9.2" fill="#ff0000" fill-opacity="0.88" stroke="#ff0000" stroke-opacity="0.55" stroke-width="1.5"/>
<circle cx="77.8" cy="200.3" r="9.2" fill="#ffff00" fill-opacity="0.88" stroke="#ffff00" stroke-opacity="0.55" stroke-width="1.5"/>
<circle cx="88.4" cy="194.5" r="9.2" fill="#ff0000" fill-opacity="0.88" stroke="#ff0000" stroke-opacity="0.55" stroke-width="1.5"/>
<circle cx="110.1" cy="206.4" r="9.2" fill="#ffff00" fill-opacity="0.88" stroke="#ffff00" stroke-opacity="0.55" stroke-width="1.5"/>
<circle cx="103.3" cy="208.1" r="9.2" fill="#ff7e00" fill-opacity="0.88" stroke="#ff7e00" stroke-opacity="0.55" stroke-width="1.5"/>
<circle cx="96.0" cy="208.6" r="9.2" fill="#ff7e00" fill-opacity="0.88" stroke="#ff7e00" stroke-opacity="0.55" stroke-width="1.5"/>
<circle cx="132.4" cy="195.5" r="9.2" fill="#a0a0a0" fill-opacity="0.88" stroke="#a0a0a0" stroke-opacity="0.55" stroke-width="1.5"/>
<circle cx="165.7" cy="188.9" r="9.2" fill="#ff0000" fill-opacity="0.88" stroke="#ff0000" stroke-opacity="0.55" stroke-width="1.5"/>
<circle cx="177.5" cy="201.6" r="9.2" fill="#ffff00" fill-opacity="0.88" stroke="#ffff00" stroke-opacity="0.55" stroke-width="1.5"/>
<circle cx="165.7" cy="218.1" r="9.2" fill="#a0a0a0" fill-opacity="0.88" stroke="#a0a0a0" stroke-opacity="0.55" stroke-width="1.5"/>
<circle cx="194.2" cy="255.5" r="9.2" fill="#00e400" fill-opacity="0.88" stroke="#00e400" stroke-opacity="0.55" stroke-width="1.5"/>
<circle cx="172.1" cy="154.5" r="9.2" fill="#a0a0a0" fill-opacity="0.88" stroke="#a0a0a0" stroke-opacity="0.55" stroke-width="1.5"/>
<circle cx="188.2" cy="151.4" r="9.2" fill="#ffff00" fill-opacity="0.88" stroke="#ffff00" stroke-opacity="0.55" stroke-width="1.5"/>
<circle cx="209.4" cy="169.2" r="9.2" fill="#ffff00" fill-opacity="0.88" stroke="#ffff00" stroke-opacity="0.55" stroke-width="1.5"/>
<circle cx="192.6" cy="170.2" r="9.2" fill="#a0a0a0" fill-opacity="0.88" stroke="#a0a0a0" stroke-opacity="0.55" stroke-width="1.5"/>
<circle cx="195.1" cy="160.2" r="9.2" fill="#ff7e00" fill-opacity="0.88" stroke="#ff7e00" stroke-opacity="0.55" stroke-width="1.5"/>
<circle cx="199.5" cy="166.9" r="9.2" fill="#ff7e00" fill-opacity="0.88" stroke="#ff7e00" stroke-opacity="0.55" stroke-width="1.5"/>
<circle cx="178.3" cy="176.9" r="9.2" fill="#ffff00" fill-opacity="0.88" stroke="#ffff00" stroke-opacity="0.55" stroke-width="1.5"/>
<circle cx="214.9" cy="140.6" r="9.2" fill="#ffff00" fill-opacity="0.88" stroke="#ffff00" stroke-opacity="0.55" stroke-width="1.5"/>
<circle cx="245.8" cy="128.2" r="9.2" fill="#00e400" fill-opacity="0.88" stroke="#00e400" stroke-opacity="0.55" stroke-width="1.5"/>
<circle cx="250.2" cy="127.3" r="9.2" fill="#ffff00" fill-opacity="0.88" stroke="#ffff00" stroke-opacity="0.55" stroke-width="1.5"/>
<circle cx="245.3" cy="155.4" r="9.2" fill="#8f3f97" fill-opacity="0.88" stroke="#8f3f97" stroke-opacity="0.55" stroke-width="1.5"/>
<circle cx="250.8" cy="161.9" r="9.2" fill="#8f3f97" fill-opacity="0.88" stroke="#8f3f97" stroke-opacity="0.55" stroke-width="1.5"/>
<circle cx="235.6" cy="132.3" r="9.2" fill="#ff0000" fill-opacity="0.88" stroke="#ff0000" stroke-opacity="0.55" stroke-width="1.5"/>
<circle cx="234.7" cy="139.1" r="9.2" fill="#ff7e00" fill-opacity="0.88" stroke="#ff7e00" stroke-opacity="0.55" stroke-width="1.5"/>
<circle cx="235.4" cy="148.6" r="9.2" fill="#ff0000" fill-opacity="0.88" stroke="#ff0000" stroke-opacity="0.55" stroke-width="1.5"/>
<circle cx="242.8" cy="150.6" r="9.2" fill="#ff0000" fill-opacity="0.88" stroke="#ff0000" stroke-opacity="0.55" stroke-width="1.5"/>
<circle cx="231.3" cy="169.9" r="9.2" fill="#ff0000" fill-opacity="0.88" stroke="#ff0000" stroke-opacity="0.55" stroke-width="1.5"/>
<circle cx="253.2" cy="185.2" r="9.2" fill="#a0a0a0" fill-opacity="0.88" stroke="#a0a0a0" stroke-opacity="0.55" stroke-width="1.5"/>
<circle cx="242.5" cy="181.8" r="9.2" fill="#ff0000" fill-opacity="0.88" stroke="#ff0000" stroke-opacity="0.55" stroke-width="1.5"/>
<circle cx="256.6" cy="193.7" r="9.2" fill="#ff0000" fill-opacity="0.88" stroke="#ff0000" stroke-opacity="0.55" stroke-width="1.5"/>
<circle cx="255.8" cy="205.6" r="9.2" fill="#ffff00" fill-opacity="0.88" stroke="#ffff00" stroke-opacity="0.55" stroke-width="1.5"/>
<circle cx="266.2" cy="163.8" r="9.2" fill="#ff0000" fill-opacity="0.88" stroke="#ff0000" stroke-opacity="0.55" stroke-width="1.5"/>
<circle cx="272.0" cy="174.6" r="9.2" fill="#8f3f97" fill-opacity="0.88" stroke="#8f3f97" stroke-opacity="0.55" stroke-width="1.5"/>
<circle cx="275.9" cy="172.1" r="9.2" fill="#7e0023" fill-opacity="0.88" stroke="#7e0023" stroke-opacity="0.55" stroke-width="1.5"/>
<circle cx="286.9" cy="186.2" r="9.2" fill="#ff0000" fill-opacity="0.88" stroke="#ff0000" stroke-opacity="0.55" stroke-width="1.5"/>
<circle cx="299.1" cy="184.0" r="9.2" fill="#ff7e00" fill-opacity="0.88" stroke="#ff7e00" stroke-opacity="0.55" stroke-width="1.5"/>
<circle cx="305.3" cy="177.8" r="9.2" fill="#ff7e00" fill-opacity="0.88" stroke="#ff7e00" stroke-opacity="0.55" stroke-width="1.5"/>
<circle cx="319.4" cy="173.5" r="9.2" fill="#ff7e00" fill-opacity="0.88" stroke="#ff7e00" stroke-opacity="0.55" stroke-width="1.5"/>
<circle cx="306.8" cy="198.1" r="9.2" fill="#ff0000" fill-opacity="0.88" stroke="#ff0000" stroke-opacity="0.55" stroke-width="1.5"/>
<circle cx="307.2" cy="230.6" r="9.2" fill="#ffff00" fill-opacity="0.88" stroke="#ffff00" stroke-opacity="0.55" stroke-width="1.5"/>
<circle cx="335.1" cy="156.2" r="9.2" fill="#ff0000" fill-opacity="0.88" stroke="#ff0000" stroke-opacity="0.55" stroke-width="1.5"/>
<circle cx="325.4" cy="135.8" r="9.2" fill="#ffff00" fill-opacity="0.88" stroke="#ffff00" stroke-opacity="0.55" stroke-width="1.5"/>
<circle cx="338.7" cy="131.0" r="9.2" fill="#ff0000" fill-opacity="0.88" stroke="#ff0000" stroke-opacity="0.55" stroke-width="1.5"/>
<circle cx="307.3" cy="114.6" r="9.2" fill="#ff0000" fill-opacity="0.88" stroke="#ff0000" stroke-opacity="0.55" stroke-width="1.5"/>
<g font-size="7.9" font-weight="bold" fill="#2b2b2b">
<rect x="133.3" y="121.2" width="10.8" height="8.2" rx="1.5" fill="#fff" fill-opacity="0.95" filter="url(#hb)"/>
<text x="138.7" y="128.4" text-anchor="middle">93</text>
<rect x="136.9" y="126.1" width="15.2" height="8.2" rx="1.5" fill="#fff" fill-opacity="0.95" filter="url(#hb)"/>
<text x="144.5" y="133.3" text-anchor="middle">156</text>
<rect x="101.9" y="139.0" width="15.2" height="8.2" rx="1.5" fill="#fff" fill-opacity="0.95" filter="url(#hb)"/>
<text x="109.5" y="146.2" text-anchor="middle">151</text>
<rect x="72.4" y="195.9" width="10.8" height="8.2" rx="1.5" fill="#fff" fill-opacity="0.95" filter="url(#hb)"/>
<text x="77.8" y="203.1" text-anchor="middle">65</text>
<rect x="80.8" y="190.1" width="15.2" height="8.2" rx="1.5" fill="#fff" fill-opacity="0.95" filter="url(#hb)"/>
<text x="88.4" y="197.3" text-anchor="middle">183</text>
<rect x="104.7" y="202.0" width="10.8" height="8.2" rx="1.5" fill="#fff" fill-opacity="0.95" filter="url(#hb)"/>
<text x="110.1" y="209.2" text-anchor="middle">53</text>
<rect x="95.7" y="203.7" width="15.2" height="8.2" rx="1.5" fill="#fff" fill-opacity="0.95" filter="url(#hb)"/>
<text x="103.3" y="210.9" text-anchor="middle">125</text>
<rect x="88.4" y="204.2" width="15.2" height="8.2" rx="1.5" fill="#fff" fill-opacity="0.95" filter="url(#hb)"/>
<text x="96.0" y="211.4" text-anchor="middle">116</text>
<rect x="124.6" y="191.1" width="15.6" height="8.2" rx="1.5" fill="#fff" fill-opacity="0.95" filter="url(#hb)"/>
<text x="132.4" y="198.3" text-anchor="middle">N/A</text>
<rect x="158.1" y="184.5" width="15.2" height="8.2" rx="1.5" fill="#fff" fill-opacity="0.95" filter="url(#hb)"/>
<text x="165.7" y="191.7" text-anchor="middle">178</text>
<rect x="172.1" y="197.2" width="10.8" height="8.2" rx="1.5" fill="#fff" fill-opacity="0.95" filter="url(#hb)"/>
<text x="177.5" y="204.4" text-anchor="middle">86</text>
<rect x="157.9" y="213.7" width="15.6" height="8.2" rx="1.5" fill="#fff" fill-opacity="0.95" filter="url(#hb)"/>
<text x="165.7" y="220.9" text-anchor="middle">N/A</text>
<rect x="188.8" y="251.1" width="10.8" height="8.2" rx="1.5" fill="#fff" fill-opacity="0.95" filter="url(#hb)"/>
<text x="194.2" y="258.3" text-anchor="middle">39</text>
<rect x="164.3" y="150.1" width="15.6" height="8.2" rx="1.5" fill="#fff" fill-opacity="0.95" filter="url(#hb)"/>
<text x="172.1" y="157.3" text-anchor="middle">N/A</text>
<rect x="182.8" y="147.0" width="10.8" height="8.2" rx="1.5" fill="#fff" fill-opacity="0.95" filter="url(#hb)"/>
<text x="188.2" y="154.2" text-anchor="middle">87</text>
<rect x="204.0" y="164.8" width="10.8" height="8.2" rx="1.5" fill="#fff" fill-opacity="0.95" filter="url(#hb)"/>
<text x="209.4" y="172.0" text-anchor="middle">61</text>
<rect x="184.8" y="165.8" width="15.6" height="8.2" rx="1.5" fill="#fff" fill-opacity="0.95" filter="url(#hb)"/>
<text x="192.6" y="173.0" text-anchor="middle">N/A</text>
<rect x="187.5" y="155.8" width="15.2" height="8.2" rx="1.5" fill="#fff" fill-opacity="0.95" filter="url(#hb)"/>
<text x="195.1" y="163.0" text-anchor="middle">107</text>
<rect x="191.9" y="162.5" width="15.2" height="8.2" rx="1.5" fill="#fff" fill-opacity="0.95" filter="url(#hb)"/>
<text x="199.5" y="169.7" text-anchor="middle">124</text>
<rect x="172.9" y="172.5" width="10.8" height="8.2" rx="1.5" fill="#fff" fill-opacity="0.95" filter="url(#hb)"/>
<text x="178.3" y="179.7" text-anchor="middle">85</text>
<rect x="209.5" y="136.2" width="10.8" height="8.2" rx="1.5" fill="#fff" fill-opacity="0.95" filter="url(#hb)"/>
<text x="214.9" y="143.4" text-anchor="middle">58</text>
<rect x="240.4" y="123.8" width="10.8" height="8.2" rx="1.5" fill="#fff" fill-opacity="0.95" filter="url(#hb)"/>
<text x="245.8" y="131.0" text-anchor="middle">33</text>
<rect x="244.8" y="122.9" width="10.8" height="8.2" rx="1.5" fill="#fff" fill-opacity="0.95" filter="url(#hb)"/>
<text x="250.2" y="130.1" text-anchor="middle">58</text>
<rect x="237.7" y="151.0" width="15.2" height="8.2" rx="1.5" fill="#fff" fill-opacity="0.95" filter="url(#hb)"/>
<text x="245.3" y="158.2" text-anchor="middle">252</text>
<rect x="243.2" y="157.5" width="15.2" height="8.2" rx="1.5" fill="#fff" fill-opacity="0.95" filter="url(#hb)"/>
<text x="250.8" y="164.7" text-anchor="middle">213</text>
<rect x="228.0" y="127.9" width="15.2" height="8.2" rx="1.5" fill="#fff" fill-opacity="0.95" filter="url(#hb)"/>
<text x="235.6" y="135.1" text-anchor="middle">157</text>
<rect x="227.1" y="134.7" width="15.2" height="8.2" rx="1.5" fill="#fff" fill-opacity="0.95" filter="url(#hb)"/>
<text x="234.7" y="141.9" text-anchor="middle">101</text>
<rect x="232.2" y="144.2" width="6.4" height="8.2" rx="1.5" fill="#fff" fill-opacity="0.95" filter="url(#hb)"/>
<text x="235.4" y="151.4" text-anchor="middle">1</text>
<rect x="235.3" y="146.2" width="15.2" height="8.2" rx="1.5" fill="#fff" fill-opacity="0.95" filter="url(#hb)"/>
<text x="242.8" y="153.4" text-anchor="middle">156</text>
<rect x="223.7" y="165.5" width="15.2" height="8.2" rx="1.5" fill="#fff" fill-opacity="0.95" filter="url(#hb)"/>
<text x="231.3" y="172.7" text-anchor="middle">156</text>
<rect x="245.4" y="180.8" width="15.6" height="8.2" rx="1.5" fill="#fff" fill-opacity="0.95" filter="url(#hb)"/>
<text x="253.2" y="188.0" text-anchor="middle">N/A</text>
<rect x="234.9" y="177.4" width="15.2" height="8.2" rx="1.5" fill="#fff" fill-opacity="0.95" filter="url(#hb)"/>
<text x="242.5" y="184.6" text-anchor="middle">155</text>
<rect x="249.0" y="189.3" width="15.2" height="8.2" rx="1.5" fill="#fff" fill-opacity="0.95" filter="url(#hb)"/>
<text x="256.6" y="196.5" text-anchor="middle">171</text>
<rect x="250.4" y="201.2" width="10.8" height="8.2" rx="1.5" fill="#fff" fill-opacity="0.95" filter="url(#hb)"/>
<text x="255.8" y="208.4" text-anchor="middle">97</text>
<rect x="258.6" y="159.4" width="15.2" height="8.2" rx="1.5" fill="#fff" fill-opacity="0.95" filter="url(#hb)"/>
<text x="266.2" y="166.6" text-anchor="middle">152</text>
<rect x="264.4" y="170.2" width="15.2" height="8.2" rx="1.5" fill="#fff" fill-opacity="0.95" filter="url(#hb)"/>
<text x="272.0" y="177.4" text-anchor="middle">210</text>
<rect x="268.3" y="167.7" width="15.2" height="8.2" rx="1.5" fill="#fff" fill-opacity="0.95" filter="url(#hb)"/>
<text x="275.9" y="174.9" text-anchor="middle">310</text>
<rect x="279.3" y="181.8" width="15.2" height="8.2" rx="1.5" fill="#fff" fill-opacity="0.95" filter="url(#hb)"/>
<text x="286.9" y="189.0" text-anchor="middle">152</text>
<rect x="291.5" y="179.6" width="15.2" height="8.2" rx="1.5" fill="#fff" fill-opacity="0.95" filter="url(#hb)"/>
<text x="299.1" y="186.8" text-anchor="middle">102</text>
<rect x="297.7" y="173.4" width="15.2" height="8.2" rx="1.5" fill="#fff" fill-opacity="0.95" filter="url(#hb)"/>
<text x="305.3" y="180.6" text-anchor="middle">140</text>
<rect x="311.8" y="169.1" width="15.2" height="8.2" rx="1.5" fill="#fff" fill-opacity="0.95" filter="url(#hb)"/>
<text x="319.4" y="176.3" text-anchor="middle">110</text>
<rect x="299.2" y="193.7" width="15.2" height="8.2" rx="1.5" fill="#fff" fill-opacity="0.95" filter="url(#hb)"/>
<text x="306.8" y="200.9" text-anchor="middle">157</text>
<rect x="301.8" y="226.2" width="10.8" height="8.2" rx="1.5" fill="#fff" fill-opacity="0.95" filter="url(#hb)"/>
<text x="307.2" y="233.4" text-anchor="middle">56</text>
<rect x="327.5" y="151.8" width="15.2" height="8.2" rx="1.5" fill="#fff" fill-opacity="0.95" filter="url(#hb)"/>
<text x="335.1" y="159.0" text-anchor="middle">157</text>
<rect x="320.0" y="131.4" width="10.8" height="8.2" rx="1.5" fill="#fff" fill-opacity="0.95" filter="url(#hb)"/>
<text x="325.4" y="138.6" text-anchor="middle">85</text>
<rect x="331.2" y="126.6" width="15.2" height="8.2" rx="1.5" fill="#fff" fill-opacity="0.95" filter="url(#hb)"/>
<text x="338.7" y="133.8" text-anchor="middle">174</text>
<rect x="299.7" y="110.2" width="15.2" height="8.2" rx="1.5" fill="#fff" fill-opacity="0.95" filter="url(#hb)"/>
<text x="307.3" y="117.4" text-anchor="middle">154</text>
</g>
</svg>
<div style="position:absolute;left:213px;top:22px;width:107.5px;height:89.6px;background:#fff;border-radius:5px;box-shadow:0 2px 5px rgba(0,0,0,0.35)"></div>
<div style="position:absolute;left:236.5px;top:111.5px;width:0;height:0;border-left:8px solid transparent;border-right:8px solid transparent;border-top:7px solid #fff;filter:drop-shadow(-1px 2px 1.5px rgba(0,0,0,0.35))"></div>
<div style="position:absolute;left:213px;top:33.3px;width:107.5px;text-align:center;font-size:9.3px;color:#333;line-height:10px;white-space:nowrap">Bishkek<br>2021-02-06 9:00 AM<br>(LT)</div>
<div style="position:absolute;left:223px;top:62.7px;width:87px;height:39px;border:1px solid #02477f;background:#fff">
  <div style="position:absolute;left:0;top:0;width:85px;height:18.5px;background:#02477f"></div>
  <div style="position:absolute;left:0;top:3.7px;width:54.5px;text-align:center;font-size:9.3px;font-weight:bold;color:#fff;line-height:11px">Pollutant</div>
  <div style="position:absolute;left:55px;top:3.7px;width:30px;text-align:center;font-size:9.3px;font-weight:bold;color:#fff;line-height:11px">AQI</div>
  <div style="position:absolute;left:54px;top:18.5px;width:31px;height:19px;background:#00e400;border-left:1px solid #fff"></div>
  <div style="position:absolute;left:0;top:22.2px;width:54.5px;text-align:center;font-size:9.3px;color:#333;line-height:11px">PM2.5</div>
  <div style="position:absolute;left:55px;top:22.2px;width:30px;text-align:center;font-size:9.3px;color:#222;line-height:11px">33</div>
</div>
</div>

<div class="a selh" style="top:6px"><span>Select a City</span></div>
<div class="a selb" style="top:31.5px"><span class="v">Bishkek</span><span class="x">×</span><span class="ar"></span></div>
<div class="a selh" style="top:69px"><span>Select a Parameter</span></div>
<div class="a selb" style="top:94.5px"><span class="v">PM2.5</span><span class="x">×</span><span class="ar"></span></div>

<div class="a" id="rss">
  <span style="position:absolute;left:7px;top:8px;font-size:9.25px;font-weight:bold;color:#333;line-height:11px">Bishkek</span>
  <svg style="position:absolute;left:192px;top:17px" width="23" height="23" viewBox="0 0 23 23">
    <rect width="23" height="23" fill="#f0b545"/>
    <circle cx="5" cy="18" r="2.4" fill="#fff"/>
    <path d="M2.8 10.0 A9.8 10 0 0 1 12.6 20" stroke="#fff" stroke-width="2.6" fill="none"/>
    <path d="M2.8 4.6 A15.6 15.4 0 0 1 18.4 20" stroke="#fff" stroke-width="2.6" fill="none"/>
  </svg>
</div>
<div class="a" id="note">Note: Values above 500 are considered Beyond the AQI. Follow<br>recommendations for the Hazardous category. Additional information<br>on reducing exposure to extremely high levels of particle pollution is<br>available <b style="color:#143a66;text-decoration:underline">here</b>.</div>

<div class="a tab" id="tab1">AQI</div>
<div class="a tab" style="left:89px;width:111px">Concentration</div>
<div class="a tab" style="left:202px;width:92px">Historical</div>
<div class="a" id="tabline"></div>
<div class="a" id="learn">Learn more about how the Air Quality Index [AQI] is calculated from the EPA <span style="color:#143a66;text-decoration:underline">here</span>.</div>

<div class="a" id="chart"></div>
<svg class="a" style="left:15px;top:373px" width="534" height="198" viewBox="15 373 534 198">
<text x="282" y="388.8" text-anchor="middle" font-size="12" letter-spacing="0.45" fill="#333">Bishkek – PM2.5</text>
<rect x="66" y="513.54" width="476" height="1" fill="#e6e6e6"/>
<text x="55.5" y="515.94" text-anchor="end" font-size="7.3" letter-spacing="0.2" fill="#222">100</text>
<rect x="66" y="491.58" width="476" height="1" fill="#e6e6e6"/>
<text x="55.5" y="493.98" text-anchor="end" font-size="7.3" letter-spacing="0.2" fill="#222">200</text>
<rect x="66" y="469.62" width="476" height="1" fill="#e6e6e6"/>
<text x="55.5" y="472.02" text-anchor="end" font-size="7.3" letter-spacing="0.2" fill="#222">300</text>
<rect x="66" y="447.66" width="476" height="1" fill="#e6e6e6"/>
<text x="55.5" y="450.06" text-anchor="end" font-size="7.3" letter-spacing="0.2" fill="#222">400</text>
<rect x="66" y="425.70" width="476" height="1" fill="#e6e6e6"/>
<text x="55.5" y="428.10" text-anchor="end" font-size="7.3" letter-spacing="0.2" fill="#222">500</text>
<text x="55.5" y="537.90" text-anchor="end" font-size="7.3" letter-spacing="0.2" fill="#222">0</text>
<text transform="translate(35,471) rotate(-90)" text-anchor="middle" font-size="8" fill="#333">AQI</text>
<rect x="70.92" y="531.61" width="10" height="4.39" fill="#00e400" stroke="#333" stroke-width="1" stroke-opacity="0.8"/>
<rect x="90.75" y="527.66" width="10" height="8.34" fill="#00e400" stroke="#333" stroke-width="1" stroke-opacity="0.8"/>
<rect x="110.58" y="528.31" width="10" height="7.69" fill="#00e400" stroke="#333" stroke-width="1" stroke-opacity="0.8"/>
<rect x="130.42" y="528.31" width="10" height="7.69" fill="#00e400" stroke="#333" stroke-width="1" stroke-opacity="0.8"/>
<rect x="150.25" y="494.93" width="10" height="41.07" fill="#ff0000" stroke="#333" stroke-width="1" stroke-opacity="0.8"/>
<rect x="170.08" y="465.51" width="10" height="70.49" fill="#4c0026" stroke="#333" stroke-width="1" stroke-opacity="0.8"/>
<rect x="189.92" y="437.18" width="10" height="98.82" fill="#4c0026" stroke="#333" stroke-width="1" stroke-opacity="0.8"/>
<rect x="209.75" y="475.17" width="10" height="60.83" fill="#99004c" stroke="#333" stroke-width="1" stroke-opacity="0.8"/>
<rect x="229.58" y="446.62" width="10" height="89.38" fill="#4c0026" stroke="#333" stroke-width="1" stroke-opacity="0.8"/>
<rect x="249.42" y="461.34" width="10" height="74.66" fill="#4c0026" stroke="#333" stroke-width="1" stroke-opacity="0.8"/>
<rect x="269.25" y="461.34" width="10" height="74.66" fill="#4c0026" stroke="#333" stroke-width="1" stroke-opacity="0.8"/>
<rect x="289.08" y="413.90" width="10" height="122.10" fill="#4c0026" stroke="#333" stroke-width="1" stroke-opacity="0.8"/>
<rect x="328.75" y="481.10" width="10" height="54.90" fill="#99004c" stroke="#333" stroke-width="1" stroke-opacity="0.8"/>
<rect x="348.58" y="497.35" width="10" height="38.65" fill="#ff0000" stroke="#333" stroke-width="1" stroke-opacity="0.8"/>
<rect x="368.42" y="503.94" width="10" height="32.06" fill="#ff7e00" stroke="#333" stroke-width="1" stroke-opacity="0.8"/>
<rect x="388.25" y="515.80" width="10" height="20.20" fill="#ffff00" stroke="#333" stroke-width="1" stroke-opacity="0.8"/>
<rect x="408.08" y="521.29" width="10" height="14.71" fill="#ffff00" stroke="#333" stroke-width="1" stroke-opacity="0.8"/>
<rect x="427.92" y="524.36" width="10" height="11.64" fill="#ffff00" stroke="#333" stroke-width="1" stroke-opacity="0.8"/>
<rect x="447.75" y="527.44" width="10" height="8.56" fill="#00e400" stroke="#333" stroke-width="1" stroke-opacity="0.8"/>
<rect x="467.58" y="507.45" width="10" height="28.55" fill="#ff7e00" stroke="#333" stroke-width="1" stroke-opacity="0.8"/>
<rect x="487.42" y="519.09" width="10" height="16.91" fill="#ffff00" stroke="#333" stroke-width="1" stroke-opacity="0.8"/>
<rect x="507.25" y="524.36" width="10" height="11.64" fill="#ffff00" stroke="#333" stroke-width="1" stroke-opacity="0.8"/>
<rect x="527.08" y="528.31" width="10" height="7.69" fill="#00e400" stroke="#333" stroke-width="1" stroke-opacity="0.8"/>
<rect x="65.50" y="536" width="1" height="6" fill="#ccd6eb"/>
<rect x="85.33" y="536" width="1" height="6" fill="#ccd6eb"/>
<rect x="105.17" y="536" width="1" height="6" fill="#ccd6eb"/>
<rect x="125.00" y="536" width="1" height="6" fill="#ccd6eb"/>
<rect x="144.83" y="536" width="1" height="6" fill="#ccd6eb"/>
<rect x="164.67" y="536" width="1" height="6" fill="#ccd6eb"/>
<rect x="184.50" y="536" width="1" height="6" fill="#ccd6eb"/>
<rect x="204.33" y="536" width="1" height="6" fill="#ccd6eb"/>
<rect x="224.17" y="536" width="1" height="6" fill="#ccd6eb"/>
<rect x="244.00" y="536" width="1" height="6" fill="#ccd6eb"/>
<rect x="263.83" y="536" width="1" height="6" fill="#ccd6eb"/>
<rect x="283.67" y="536" width="1" height="6" fill="#ccd6eb"/>
<rect x="303.50" y="536" width="1" height="6" fill="#ccd6eb"/>
<rect x="323.33" y="536" width="1" height="6" fill="#ccd6eb"/>
<rect x="343.17" y="536" width="1" height="6" fill="#ccd6eb"/>
<rect x="363.00" y="536" width="1" height="6" fill="#ccd6eb"/>
<rect x="382.83" y="536" width="1" height="6" fill="#ccd6eb"/>
<rect x="402.67" y="536" width="1" height="6" fill="#ccd6eb"/>
<rect x="422.50" y="536" width="1" height="6" fill="#ccd6eb"/>
<rect x="442.33" y="536" width="1" height="6" fill="#ccd6eb"/>
<rect x="462.17" y="536" width="1" height="6" fill="#ccd6eb"/>
<rect x="482.00" y="536" width="1" height="6" fill="#ccd6eb"/>
<rect x="501.83" y="536" width="1" height="6" fill="#ccd6eb"/>
<rect x="521.67" y="536" width="1" height="6" fill="#ccd6eb"/>
<rect x="541.50" y="536" width="1" height="6" fill="#ccd6eb"/>
<rect x="66" y="535.5" width="476" height="1" fill="#ccd6eb"/>
<text transform="translate(77.12,545.3) rotate(-45)" text-anchor="end" font-size="7.4" letter-spacing="0.4" fill="#6a6a6a">10 AM</text>
<text transform="translate(96.95,545.3) rotate(-45)" text-anchor="end" font-size="7.4" letter-spacing="0.4" fill="#6a6a6a">11 AM</text>
<text transform="translate(116.78,545.3) rotate(-45)" text-anchor="end" font-size="7.4" letter-spacing="0.4" fill="#6a6a6a">12 PM</text>
<text transform="translate(136.62,545.3) rotate(-45)" text-anchor="end" font-size="7.4" letter-spacing="0.4" fill="#6a6a6a">1 PM</text>
<text transform="translate(156.45,545.3) rotate(-45)" text-anchor="end" font-size="7.4" letter-spacing="0.4" fill="#6a6a6a">2 PM</text>
<text transform="translate(176.28,545.3) rotate(-45)" text-anchor="end" font-size="7.4" letter-spacing="0.4" fill="#6a6a6a">3 PM</text>
<text transform="translate(196.12,545.3) rotate(-45)" text-anchor="end" font-size="7.4" letter-spacing="0.4" fill="#6a6a6a">4 PM</text>
<text transform="translate(215.95,545.3) rotate(-45)" text-anchor="end" font-size="7.4" letter-spacing="0.4" fill="#6a6a6a">5 PM</text>
<text transform="translate(235.78,545.3) rotate(-45)" text-anchor="end" font-size="7.4" letter-spacing="0.4" fill="#6a6a6a">6 PM</text>
<text transform="translate(255.62,545.3) rotate(-45)" text-anchor="end" font-size="7.4" letter-spacing="0.4" fill="#6a6a6a">7 PM</text>
<text transform="translate(275.45,545.3) rotate(-45)" text-anchor="end" font-size="7.4" letter-spacing="0.4" fill="#6a6a6a">8 PM</text>
<text transform="translate(295.28,545.3) rotate(-45)" text-anchor="end" font-size="7.4" letter-spacing="0.4" fill="#6a6a6a">9 PM</text>
<text transform="translate(315.12,545.3) rotate(-45)" text-anchor="end" font-size="7.4" letter-spacing="0.4" fill="#6a6a6a">10 PM</text>
<text transform="translate(334.95,545.3) rotate(-45)" text-anchor="end" font-size="7.4" letter-spacing="0.4" fill="#6a6a6a">11 PM</text>
<text transform="translate(354.78,545.3) rotate(-45)" text-anchor="end" font-size="7.4" letter-spacing="0.4" fill="#6a6a6a">2021 12 AM</text>
<text transform="translate(374.62,545.3) rotate(-45)" text-anchor="end" font-size="7.4" letter-spacing="0.4" fill="#6a6a6a">1 AM</text>
<text transform="translate(394.45,545.3) rotate(-45)" text-anchor="end" font-size="7.4" letter-spacing="0.4" fill="#6a6a6a">2 AM</text>
<text transform="translate(414.28,545.3) rotate(-45)" text-anchor="end" font-size="7.4" letter-spacing="0.4" fill="#6a6a6a">3 AM</text>
<text transform="translate(434.12,545.3) rotate(-45)" text-anchor="end" font-size="7.4" letter-spacing="0.4" fill="#6a6a6a">4 AM</text>
<text transform="translate(453.95,545.3) rotate(-45)" text-anchor="end" font-size="7.4" letter-spacing="0.4" fill="#6a6a6a">5 AM</text>
<text transform="translate(473.78,545.3) rotate(-45)" text-anchor="end" font-size="7.4" letter-spacing="0.4" fill="#6a6a6a">6 AM</text>
<text transform="translate(493.62,545.3) rotate(-45)" text-anchor="end" font-size="7.4" letter-spacing="0.4" fill="#6a6a6a">7 AM</text>
<text transform="translate(513.45,545.3) rotate(-45)" text-anchor="end" font-size="7.4" letter-spacing="0.4" fill="#6a6a6a">8 AM</text>
<text transform="translate(533.28,545.3) rotate(-45)" text-anchor="end" font-size="7.4" letter-spacing="0.4" fill="#6a6a6a">9 AM</text>
</svg>
<div class="a" id="cc">
  <div style="position:absolute;left:0;top:0;width:166px;height:49px;background:#02477f"></div>
  <div style="position:absolute;left:0;top:49px;width:166px;height:77.5px;background:#00e400"></div>
  <div class="a" style="left:0;width:166px;top:5px;text-align:center;font-size:10px;font-weight:bold;color:#fff;line-height:11px">Current Conditions</div>
  <div class="a" style="left:0;width:166px;top:19.5px;text-align:center;font-size:8px;font-weight:bold;color:#fff;line-height:9px">observed at</div>
  <div class="a" style="left:0;width:166px;top:33px;text-align:center;font-size:10px;font-weight:bold;color:#fff;line-height:11px">Feb 6, 2021 9:00 AM (LT)</div>
  <div class="a" style="left:0;width:166px;top:60.5px;text-align:center;font-size:13.1px;font-weight:bold;color:#111;line-height:18.8px">33 AQI<br>Good<br>PM2.5</div>
  <div class="a" style="left:0;width:166px;top:132px;text-align:center;font-size:8px;font-weight:bold;color:#222;line-height:9px">Health Message</div>
  <div class="a" style="left:3px;top:147px;font-size:8px;color:#4a4a4a;line-height:14px">The AQI value for your community is<br>between 0 and 50. Air quality is satisfactory<br>and poses little or no health risk.</div>
</div>
</body></html>
